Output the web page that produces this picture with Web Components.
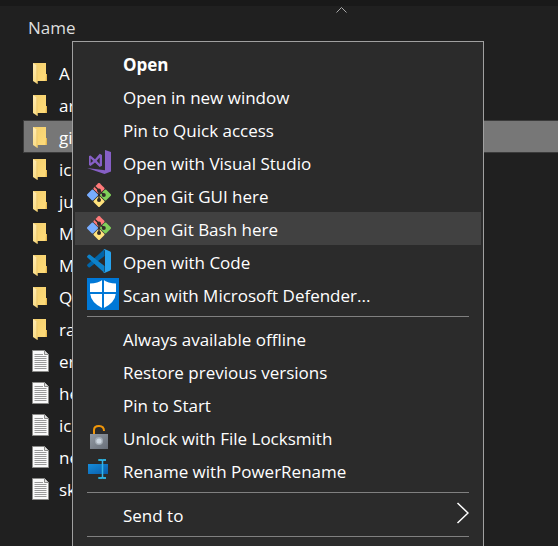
<!DOCTYPE html>
<html lang="en">
<head>
<meta charset="utf-8">
<title>File Explorer</title>
<style>
  html, body { margin: 0; height: 100%; background: #202020; }
  body { font: 17px/24px "Open Sans", "Noto Sans", sans-serif; color: #fff; overflow: hidden; }
</style>
</head>
<body>
<explorer-pane>
  <file-row kind="folder">A</file-row>
  <file-row kind="folder">ar</file-row>
  <file-row kind="folder" selected>gi</file-row>
  <file-row kind="folder">ic</file-row>
  <file-row kind="folder">ju</file-row>
  <file-row kind="folder">M</file-row>
  <file-row kind="folder">M</file-row>
  <file-row kind="folder">Q</file-row>
  <file-row kind="folder">ra</file-row>
  <file-row kind="text">er</file-row>
  <file-row kind="text">he</file-row>
  <file-row kind="text">ic</file-row>
  <file-row kind="text">ne</file-row>
  <file-row kind="text">sk</file-row>
  <context-menu slot="menu">
    <menu-item primary>Open</menu-item>
    <menu-item>Open in new window</menu-item>
    <menu-item>Pin to Quick access</menu-item>
    <menu-item icon="vs">Open with Visual Studio</menu-item>
    <menu-item icon="git">Open Git GUI here</menu-item>
    <menu-item icon="git" active>Open Git Bash here</menu-item>
    <menu-item icon="code">Open with Code</menu-item>
    <menu-item icon="shield">Scan with Microsoft Defender...</menu-item>
    <menu-divider></menu-divider>
    <menu-item>Always available offline</menu-item>
    <menu-item>Restore previous versions</menu-item>
    <menu-item>Pin to Start</menu-item>
    <menu-item icon="lock">Unlock with File Locksmith</menu-item>
    <menu-item icon="rename">Rename with PowerRename</menu-item>
    <menu-divider></menu-divider>
    <menu-item submenu>Send to</menu-item>
    <menu-divider></menu-divider>
  </context-menu>
</explorer-pane>
<script>
const ICONS = {
  folder: `<svg width="18" height="22" viewBox="0 0 18 22"><defs><linearGradient id="b" x2="1" y2="1"><stop stop-color="#f3cf6c"/><stop offset="1" stop-color="#ffdc7c"/></linearGradient><linearGradient id="f" x2="0" y2="1"><stop stop-color="#ffeab0"/><stop offset="1" stop-color="#f9dc86"/></linearGradient></defs><path d="M1 1H14V12H15V19H4Z" fill="url(#b)"/><path d="M14 12H15V19H13.500Z" fill="#e7b950"/><path d="M1 1L5.500 4V22L1 19Z" fill="url(#f)"/><path d="M5.500 4V22L4.500 21V3.300Z" fill="#e9c15e"/></svg>`,
  text: `<svg width="18" height="22" viewBox="0 0 18 22"><path d="M.5.500H12.500L16.500 4.500V21.500H.5Z" fill="#fafafa" stroke="#8b8b89"/><path d="M12.500.500V4.500H16.500" fill="#ddd" stroke="#8b8b89"/><path d="M2.500 4.500H11M2.500 6.500H14.500M2.500 8.500H14.500M2.500 10.500H14.500M2.500 12.500H14.500M2.500 14.500H14.500M2.500 16.500H14.500M2.500 18.500H14.500" stroke="#999"/></svg>`,
  vs: `<svg width="24" height="24" viewBox="0 0 24 24" fill="#865fc5"><path d="M18 0L24 2V21.500L17.500 24L0 18L18 20.300Z"/><path fill-rule="evenodd" d="M2 6L3.500 5.500L8 9.200L12.700 3.800L15 5V15.800L12.700 17L8 12.400L3.500 16L2 15ZM3.700 8.500V13L6.200 11ZM12.700 7.500L9.700 10.800L12.700 14Z"/></svg>`,
  git: `<svg width="24" height="24" viewBox="0 0 24 24"><g transform="rotate(45 12 12)"><rect x="3.200" y="3.200" width="8.400" height="8.400" rx="1" fill="#ff7a7a"/><rect x="12.400" y="3.200" width="8.400" height="8.400" rx="1" fill="#80d15a"/><rect x="12.400" y="12.400" width="8.400" height="8.400" rx="1" fill="#ffe27c"/><rect x="3.200" y="12.400" width="8.400" height="8.400" rx="1" fill="#78adff"/></g><path d="M8 3.500L12 7.500V17M12 7.500L17 12" fill="none" stroke="#302c28" stroke-width="1.500"/><g fill="#302c28"><circle cx="12" cy="7.500" r="2"/><circle cx="16.800" cy="12" r="2"/><circle cx="12" cy="17" r="2"/></g></svg>`,
  code: `<svg width="24" height="24" viewBox="0 0 24 24"><path d="M17.500 0V7L3 18.300Q2.200 18.900 1.500 18.200L.3 17Q-.2 16.300.4 15.600Z" fill="#0065a9"/><path d="M17.500 24V17L3 5.700Q2.200 5.100 1.500 5.800L.3 7Q-.2 7.700.4 8.400Z" fill="#0d82ca"/><path d="M17.500 0L23.200 2.600Q24 3 24 4V20Q24 21 23.200 21.400L17.500 24Q16.600 24 16.200 23.500Q18 24 18 22V2Q18 0 16.200.5Q16.800 0 17.500 0Z" fill="#27a3ee"/></svg>`,
  shield: `<svg width="32" height="32" viewBox="0 0 32 32"><path fill="#0078d7" d="M0 0H32V32H0Z"/><path fill="#fff" d="M16 1.500Q21 5.300 29 5.500V15Q28 25 16 30.500Q4 25 3 15V5.500Q11 5.300 16 1.500Z"/><path d="M16 1V31M2 15H30" stroke="#0078d7" stroke-width="2"/></svg>`,
  lock: `<svg width="24" height="24" viewBox="0 0 24 24"><defs><linearGradient id="l" x2="1" y2="1"><stop stop-color="#929aa3"/><stop offset="1" stop-color="#686f79"/></linearGradient></defs><path d="M7 9V5Q7 1 12 1Q17 1 17 6" fill="none" stroke="#f09609" stroke-width="2"/><path d="M3 9H21V24H3Z" fill="url(#l)"/><circle cx="12" cy="16" r="4" fill="#a2abb4"/><circle cx="12" cy="16" r="2.600" fill="#ccd6df"/></svg>`,
  rename: `<svg width="24" height="24" viewBox="0 0 24 24"><defs><linearGradient id="r" x2="1" y2="1"><stop stop-color="#168ddb"/><stop offset="1" stop-color="#0a5ca8"/></linearGradient></defs><path d="M1 6H21V16H1Z" fill="url(#r)"/><path d="M11 2H19M11 20H19" stroke="#258da6" stroke-width="2"/><path d="M12 2H14.500L15.500 3V19L14.500 20H12M19 2H16.500L15.500 3M15.500 19L16.500 20H19" fill="none" stroke="#32b5e8" stroke-width="1.500"/></svg>`
};

customElements.define("explorer-pane", class extends HTMLElement {
  constructor() {
    super();
    this.attachShadow({ mode: "open" }).innerHTML = `
      <style>
        :host { display: block; position: relative; min-height: 100vh; overflow: hidden; }
        .strip { height: 6px; background: #191919; }
        header { display: flex; height: 50px; padding-left: 28px; align-items: flex-start; }
        button { all: unset; padding-top: 10px; color: #dedede; }
        .sort { position: absolute; left: 336px; top: 7px; }
        .files { padding-left: 23px; }
        ::slotted([slot=menu]) { position: absolute; left: 72px; right: 74px; top: 41px; bottom: -1px; }
      </style>
      <div class="strip"></div>
      <header><button type="button">Name</button>
        <svg class="sort" width="11" height="6" viewBox="0 0 11 6"><path d="M.5 5.500L5.500.500L10.500 5.500" fill="none" stroke="#aaa"/></svg>
      </header>
      <div class="files" role="listbox" aria-label="Files"><slot></slot></div>
      <slot name="menu"></slot>`;
  }
});

customElements.define("file-row", class extends HTMLElement {
  constructor() {
    super();
    this.setAttribute("role", "option");
    this.attachShadow({ mode: "open" }).innerHTML = `
      <style>
        :host { display: grid; grid-template-columns: 18px 1fr; column-gap: 9px; align-items: center;
          box-sizing: border-box; height: 33px; margin-bottom: -1px; padding-left: 8px;
          border: 1px solid transparent; border-right: 0; }
        :host([selected]) { background: #777; border-color: #3b3b3b; }
        svg { display: block; }
        span { padding-top: 3px; white-space: nowrap; }
      </style>${ICONS[this.getAttribute("kind")]}<span><slot></slot></span>`;
  }
});

customElements.define("context-menu", class extends HTMLElement {
  constructor() {
    super();
    this.setAttribute("role", "menu");
    this.attachShadow({ mode: "open" }).innerHTML = `
      <style>
        :host { display: block; box-sizing: border-box; padding: 5px 2px; background: #2b2b2b; border: 1px solid #a0a0a0; }
      </style><slot></slot>`;
  }
});

customElements.define("menu-item", class extends HTMLElement {
  constructor() {
    super();
    const arrow = this.hasAttribute("submenu")
      ? `<svg width="13" height="22" viewBox="0 0 13 22"><path d="M1.500 1L12 11L1.500 21" fill="none" stroke="#fff" stroke-width="1.500"/></svg>` : "";
    this.attachShadow({ mode: "open" }).innerHTML = `
      <style>
        :host { display: block; }
        button { all: unset; box-sizing: border-box; display: grid; grid-template-columns: 36px 1fr auto;
          width: 100%; height: 33px; padding: 0 12px; align-items: center; }
        :host([active]) button { background: #414141; }
        :host([primary]) button { font-weight: 700; }
        .icon { align-self: start; padding-top: 4px; }
        :host([icon=shield]) .icon { padding-top: 0; }
        svg { display: block; }
        .label { padding-top: 2px; white-space: nowrap; }
        .label + svg { align-self: start; padding-top: 4px; }
      </style>
      <button type="button" role="menuitem"><span class="icon">${ICONS[this.getAttribute("icon")] || ""}</span><span class="label"><slot></slot></span>${arrow}</button>`;
  }
});

customElements.define("menu-divider", class extends HTMLElement {
  constructor() {
    super();
    this.setAttribute("role", "separator");
    this.attachShadow({ mode: "open" }).innerHTML = `
      <style>
        :host { display: block; padding: 5px 12px; }
        div { height: 1px; background: #808080; }
      </style><div></div>`;
  }
});
</script>
</body>
</html>
